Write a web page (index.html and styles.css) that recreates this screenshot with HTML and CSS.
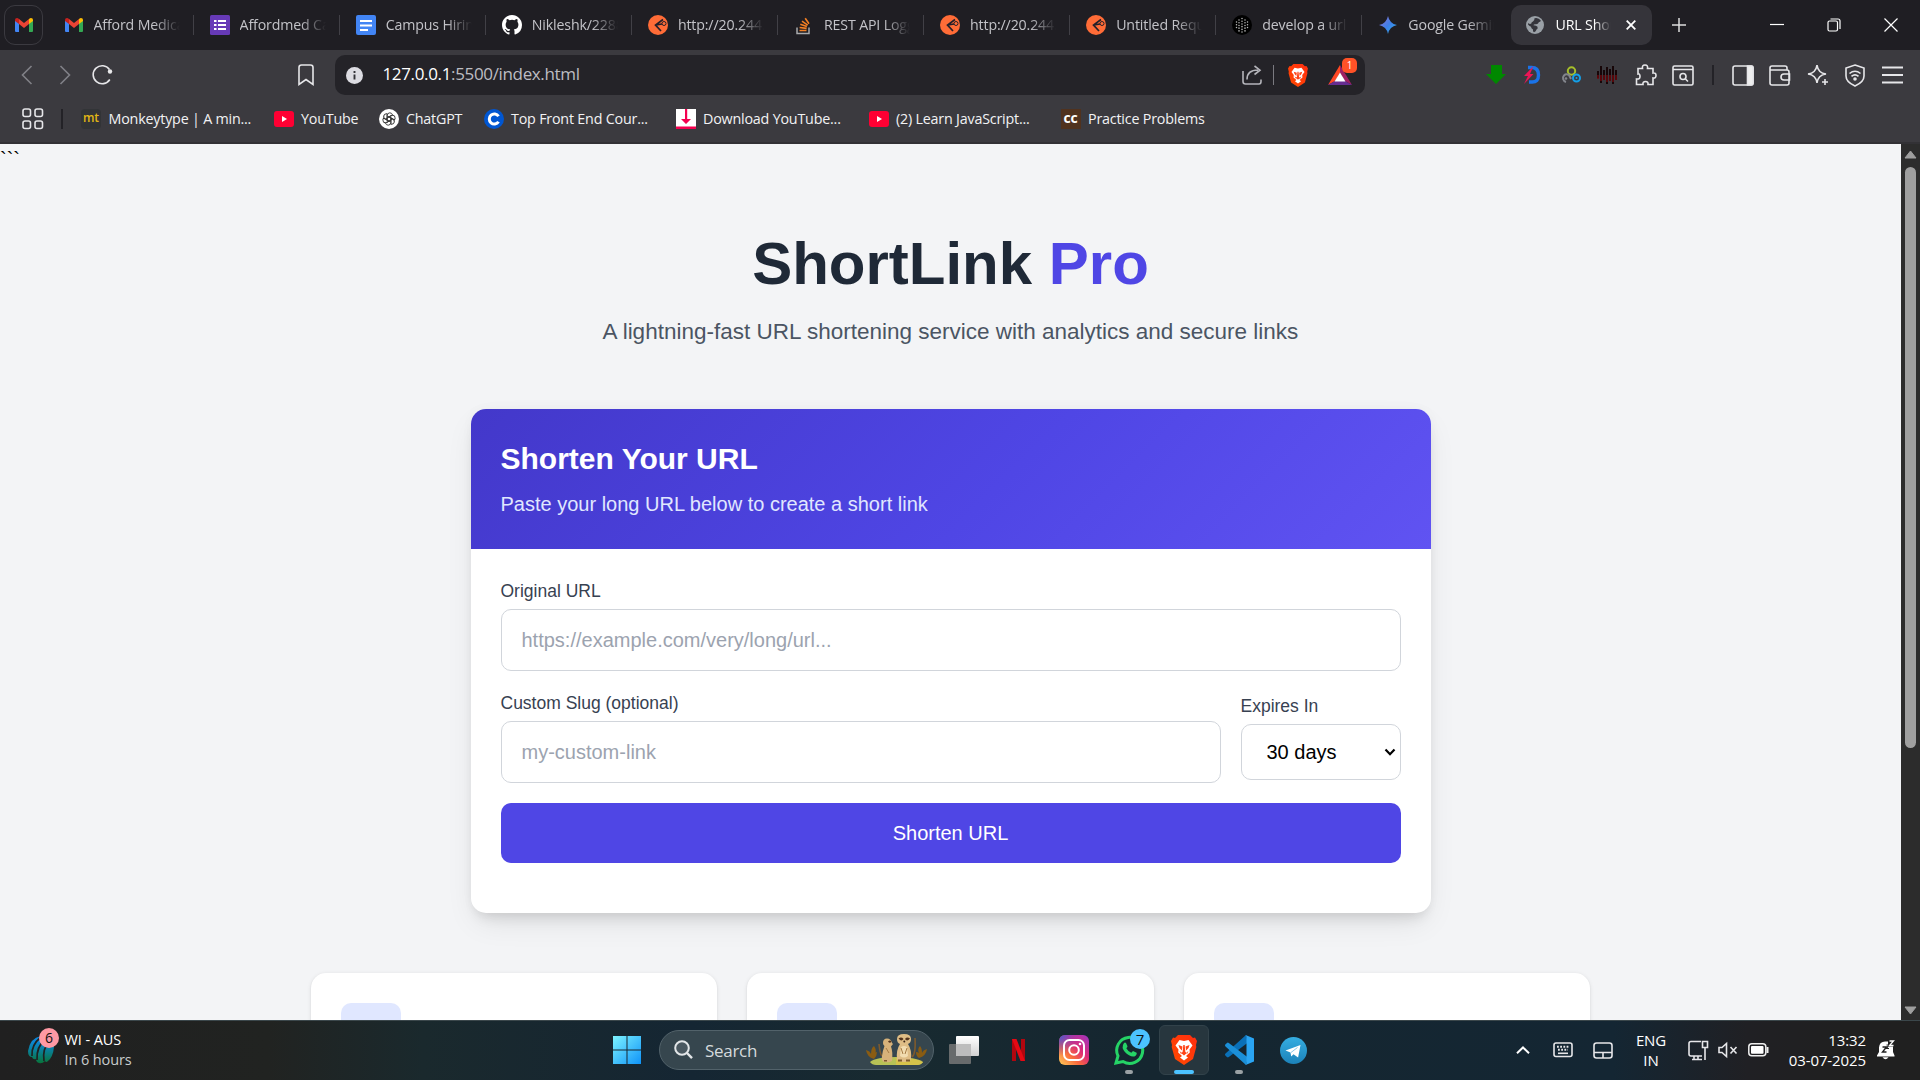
FILE: index.html
```html
<!DOCTYPE html>
<html lang="en">
<head>
<meta charset="utf-8">
<title>URL Shortener</title>
<link rel="stylesheet" href="styles.css">
</head>
<body>
<svg class="defs" aria-hidden="true">
  <defs>
    <linearGradient id="gem" x1="0" x2="1" y1="0" y2="1"><stop offset="0" stop-color="#9b72cb"/><stop offset=".5" stop-color="#3f7fe8"/><stop offset="1" stop-color="#2ab0e8"/></linearGradient>
    <linearGradient id="braveG" x1="0" x2="1" y1="1" y2="0"><stop offset="0" stop-color="#ff4b00"/><stop offset="1" stop-color="#ff2d10"/></linearGradient>
    <linearGradient id="win" x1="0" x2="1" y1="0" y2="1"><stop offset="0" stop-color="#7df3ff"/><stop offset="1" stop-color="#0f93f8"/></linearGradient>
    <linearGradient id="cric" x1="0" x2="0" y1="0" y2="1"><stop offset=".2" stop-color="#0b87d8"/><stop offset="1" stop-color="#08743a"/></linearGradient>
    <linearGradient id="igA" x1="0" x2="1" y1="1" y2="0"><stop offset="0" stop-color="#ffd05a"/><stop offset=".35" stop-color="#fa6a3c"/><stop offset=".6" stop-color="#dc2c77"/><stop offset="1" stop-color="#9b36c4"/></linearGradient>
    <radialGradient id="igB" cx="0" cy="0" r=".7"><stop offset="0" stop-color="#3b5bd8"/><stop offset="1" stop-color="#7c3fd0" stop-opacity="0"/></radialGradient>
    <linearGradient id="tg" x1="0" x2="0" y1="0" y2="1"><stop offset="0" stop-color="#35ade1"/><stop offset="1" stop-color="#1c82b9"/></linearGradient>
    <linearGradient id="tvA" x1="0" x2="0" y1="0" y2="1"><stop offset="0" stop-color="#fff"/><stop offset="1" stop-color="#d2d2d2"/></linearGradient>
  </defs>
  <symbol id="gmail" viewBox="0 0 20 16"><path fill="#4285f4" d="M1 3v11q0 1 1 1h3V6z"/><path fill="#34a853" d="M15 6v9h3q1 0 1-1V3z"/><path fill="#ea4335" d="M5 2l5 4 5-4v5l-5 4-5-4z"/><path fill="#c5221f" d="M1 4V3q0-2 2-2 1 0 2 1v5z"/><path fill="#fbbc04" d="M15 2q1-1 2-1 2 0 2 2v1l-4 3z"/></symbol>
  <symbol id="forms" viewBox="0 0 20 20"><rect width="20" height="20" rx="1.5" fill="#673ab7"/><path stroke="#fff" stroke-width="2" d="M4 6h2.500M8 6h8M4 10h2.500M8 10h8M4 14h2.500M8 14h8"/></symbol>
  <symbol id="docs" viewBox="0 0 20 20"><rect width="20" height="20" rx="2" fill="#4285f4"/><path stroke="#fff" stroke-width="2" d="M4 6h12M4 10.500h12M4 15h8"/></symbol>
  <symbol id="github" viewBox="0 0 16 16"><path fill="#fff" d="M8 0C3.580 0 0 3.580 0 8c0 3.540 2.290 6.530 5.470 7.590.4.070.55-.17.55-.38 0-.19-.01-.82-.01-1.490-2.010.37-2.530-.49-2.690-.94-.09-.23-.48-.94-.82-1.130-.28-.15-.68-.52-.01-.53.63-.01 1.080.58 1.230.82.72 1.210 1.870.87 2.330.66.070-.52.280-.87.510-1.070-1.780-.2-3.640-.89-3.640-3.950 0-.87.310-1.590.82-2.150-.08-.2-.36-1.020.08-2.120 0 0 .67-.21 2.200.82a7.600 7.600 0 014 0c1.530-1.040 2.200-.82 2.200-.82.440 1.100.160 1.920.080 2.120.510.560.820 1.270.820 2.150 0 3.070-1.870 3.750-3.650 3.950.290.250.540.730.540 1.480 0 1.070-.01 1.930-.01 2.200 0 .210.150.460.550.380A8.010 8.010 0 0016 8c0-4.420-3.580-8-8-8z"/></symbol>
  <symbol id="postman" viewBox="0 0 20 20"><circle cx="10" cy="10" r="10" fill="#ff6c37"/><path d="M15 4.500L7.500 10l5.500 6M8 10l6-1" fill="none" stroke="#24202a" stroke-width="1.700"/><circle cx="16" cy="8.500" r="2" fill="#ff6c37" stroke="#24202a"/></symbol>
  <symbol id="stack" viewBox="0 0 20 20"><path d="M3 12.500v6h12v-6" fill="none" stroke="#a9abad" stroke-width="1.500"/><path d="M5.500 15.500h7M5.600 12.500l7 .9M6.300 9.200l6.600 2.400M8 6.200l5.700 4M11.200 3.200l3.800 5.600" stroke="#f48024" stroke-width="1.600"/></symbol>
  <symbol id="dots" viewBox="0 0 20 20"><circle cx="10" cy="10" r="10" fill="#000"/><g fill="none" stroke="#bbb" stroke-width="1.500" stroke-linecap="round" stroke-dasharray=".1 2.600"><path d="M10 3.500v14M7 5v11M13 5v11M4.500 7v7M15.500 7v7"/></g></symbol>
  <symbol id="gemini" viewBox="0 0 20 20"><path fill="url(#gem)" d="M10 1q1.500 7.500 9 9-7.500 1.500-9 9-1.500-7.500-9-9 7.500-1.500 9-9z"/></symbol>
  <symbol id="globe" viewBox="0 0 20 20"><circle cx="10" cy="10" r="9" fill="#9aa0a6"/><path d="M9.500 3.200q4-1 6.300 2.300-.3 1.500-1.800 1.500-1 2.300-3 2.200-2.500-.3-2.500 1 3 .3 4 1.500.8 2-1 2.800-.5 2.300-2.500 2.800-1.500-.5-1-2.800-2-1-2-2.700Q4 11 3 9.500l.3-1.500q1.500 1.500 3 .5 0-1.700 1.700-2 1.600-.6 1.500-3.300z" fill="#35353c"/></symbol>
  <symbol id="yt" viewBox="0 0 20 14"><rect y="-1" width="20" height="16" rx="3" fill="#ff0033"/><path fill="#fff" d="M8 4v6l5-3z"/></symbol>
  <symbol id="gpt" viewBox="0 0 20 20"><circle cx="10" cy="10" r="10" fill="#fff"/><g fill="none" stroke="#333" stroke-width=".9"><path id="petal" d="M8.200 12.800V6.500q.2-2.600 2.600-2.700 2 .1 2.700 1.900L8.600 8.600"/><use href="#petal" transform="rotate(60 10 10)"/><use href="#petal" transform="rotate(120 10 10)"/><use href="#petal" transform="rotate(180 10 10)"/><use href="#petal" transform="rotate(240 10 10)"/><use href="#petal" transform="rotate(300 10 10)"/></g></symbol>
  <symbol id="cours" viewBox="0 0 20 20"><circle cx="10" cy="10" r="10" fill="#0056d2"/><path d="M14.500 7.300a5 5 0 100 5.400" fill="none" stroke="#fff" stroke-width="3"/></symbol>
  <symbol id="dl" viewBox="0 0 20 20"><path fill="#fff" d="M0 0h20v20H0z"/><path fill="#f4004f" d="M9 0h2.200v10H15l-5 5-5-5h4zM0 17.500h20V20H0z"/></symbol>
  <symbol id="brave" viewBox="0 0 26 30"><path fill="url(#braveG)" d="M7 0h12l3 3 2-.5L26 6l-1 4 .3 2-3.300 12L13 30 4 24 .7 12 1 10 0 6l2-3.500L4 3z"/><path fill="#fff" d="M8.500 5L13 6l4.500-1 4 5.500-3 4 .3 3-3.800 3.500 2 1.500-4 3-4-3 2-1.500L7.200 17.500l.3-3-3-4z"/><path fill="#ff4316" d="M7.500 10l4 1.500-.7 4L8.500 13zm11 0l-4 1.500.7 4 2.300-2.500zM12.300 10h1.400l.7 7 1.500 1-2.900 2.500-2.900-2.500 1.500-1zM8.500 16l2.500 2-1 1zm9 0L15 18l1 1z"/></symbol>
</svg>

<div class="browser">
  <div class="tabstrip">
    <div class="pinned"><svg class="i20"><use href="#gmail"/></svg></div>
    <div class="tab"><svg class="i20"><use href="#gmail"/></svg><span class="ttl">Afford Medical</span></div>
    <div class="tab"><svg class="i20"><use href="#forms"/></svg><span class="ttl">Affordmed Campus</span></div>
    <div class="tab"><svg class="i20"><use href="#docs"/></svg><span class="ttl">Campus Hiring Eval</span></div>
    <div class="tab"><svg class="i20"><use href="#github"/></svg><span class="ttl">Nikleshk/22881</span></div>
    <div class="tab"><svg class="i20"><use href="#postman"/></svg><span class="ttl">http://20.244.56</span></div>
    <div class="tab"><svg class="i20"><use href="#stack"/></svg><span class="ttl">REST API Logging</span></div>
    <div class="tab"><svg class="i20"><use href="#postman"/></svg><span class="ttl">http://20.244.56</span></div>
    <div class="tab"><svg class="i20"><use href="#postman"/></svg><span class="ttl">Untitled Request</span></div>
    <div class="tab"><svg class="i20"><use href="#dots"/></svg><span class="ttl">develop a url short</span></div>
    <div class="tab last"><svg class="i20"><use href="#gemini"/></svg><span class="ttl">Google Gemini</span></div>
    <div class="tab active"><svg class="i20"><use href="#globe"/></svg><span class="ttl">URL Shortener</span><svg class="close" viewBox="0 0 10 10"><path d="M.7.7l8.600 8.600M9.300.7L.7 9.300" stroke="#fff" stroke-width="1.800"/></svg></div>
    <svg class="plus" viewBox="0 0 14 14"><path d="M7 0v14M0 7h14" stroke="#ddd" stroke-width="1.500"/></svg>
    <div class="winbtns">
      <span><svg width="14" height="14"><path d="M0 6.500h14" stroke="#fff" stroke-width="1.200"/></svg></span>
      <span><svg width="14" height="14" fill="none" stroke="#fff" stroke-width="1.200"><rect x="1" y="3" width="9.500" height="10" rx="1.500"/><path d="M3.500 1H11q2 0 2 2v8"/></svg></span>
      <span><svg width="14" height="14"><path d="M.5.5l13 13M13.500.5l-13 13" stroke="#fff" stroke-width="1.200"/></svg></span>
    </div>
  </div>

  <div class="toolbar">
    <div class="nav">
      <svg width="12" height="20" class="dim"><path d="M10.500 1L1.500 10l9 9"/></svg>
      <svg width="12" height="20" class="dim"><path d="M1.500 1l9 9-9 9"/></svg>
      <svg width="22" height="22" class="ln reload"><path d="M18.500 5.500A9 9 0 1018.800 15.500"/><circle cx="19" cy="7.500" r="2.200" fill="#e8e8ea" stroke="none"/></svg>
    </div>
    <svg width="18" height="22" class="ln mark"><path d="M2 3.500Q2 1 4.500 1h9Q16 1 16 3.500V20.500l-7-5-7 5z"/></svg>
    <div class="urlbar">
      <svg width="17" height="17"><circle cx="8.500" cy="8.500" r="8.500" fill="#dcdce2"/><path d="M8.500 7.500v5M8.500 4v2" stroke="#333338" stroke-width="1.900"/></svg>
      <span class="url">127.0.0.1<i>:5500/index.html</i></span>
      <svg width="20" height="20" class="share"><path d="M1 6v10.500Q1 19 3.500 19H17q2 0 2-2.500v-2M5 14.500Q5 5 16 5M12.500 1l5.500 4.200L12.500 9.500"/></svg>
      <b class="vr"></b>
      <svg class="shield"><use href="#brave"/></svg>
      <div class="bat"><svg width="24" height="21" viewBox="0 0 24 21"><path fill="#ff4724" d="M12 0v8L7 16 0 20z"/><path fill="#9e1f63" d="M12 0l12 20-7-4-5-8z"/><path fill="#662d91" d="M0 20l7-4h10l7 4z"/><path fill="#fff" d="M12 7.500l5.500 9h-11z"/></svg><em>1</em></div>
    </div>
    <div class="exts">
      <span><svg width="20" height="20"><path fill="#080" d="M5 0h11v9h4L10 19 0 9h5z"/></svg></span>
      <span><svg width="18" height="20"><path d="M4 2.500h3.500q7 0 7 7.500t-7 7H5" fill="none" stroke="#1a73e8" stroke-width="3.400"/><path fill="#ed1556" d="M9.500 1L0 11h4l-4 8 9.500-10H6z"/></svg></span>
      <span><svg width="20" height="18" fill="none" stroke-width="2"><circle cx="10.500" cy="5" r="3.700" stroke="#a6bf2a"/><path d="M5 16a4 4 0 01-2-6.500q2-2 5-.5l2 4" stroke="#83858c"/><circle cx="5" cy="12.500" r="1.300" fill="#83858c" stroke="none"/><circle cx="15.500" cy="12" r="3.500" stroke="#149fe8"/><circle cx="15.500" cy="12" r="1" fill="#149fe8" stroke="none"/></svg></span>
      <span><svg width="22" height="20"><path d="M1 6v7M4 1v17M7 5v10M10 2v17M13 4v12M16 1v18M19 5v10" stroke="#170608" stroke-width="2"/><path d="M1 10v4M4 10v6M7 10v5M10 10v7M13 10v6M16 10v7M19 10v5" stroke="#6d090c" stroke-width="1.500"/></svg></span>
      <span><svg width="22" height="22" class="ln"><path d="M3 4.500h4.500q-.7-3.500 2.500-3.500t2.500 3.500H18V9q3-.5 3 2.500T18 14v6.500h-5q.5-3-2.500-3t-2.500 3H1.500V15q3.500.5 3.500-2.500T3 10z"/></svg></span>
      <span><svg width="22" height="21" class="ln"><rect x="1" y="1" width="20" height="19" rx="1.500"/><path d="M1 4.500h20M13.500 14l2.500 2.500"/><circle cx="11" cy="11.500" r="3"/></svg></span>
      <b></b>
      <span><svg width="22" height="21" class="ln"><rect x="1" y="1" width="20" height="19" rx="2"/><path fill="#eee" d="M15.500 1h4q1.500 0 1.500 1.500v16q0 1.500-1.500 1.500h-4z"/></svg></span>
      <span><svg width="22" height="21" class="ln"><path d="M18 5V3q0-2-2-2H3Q1 1 1 3v15q0 2 2 2h15q2 0 2-2V7q0-2-2-2H1M20.500 9H15q-3 0-3 3t3 3h5.500z"/></svg></span>
      <span><svg width="22" height="22" class="ln"><path d="M10 1q1 8 9 9-8 1-9 9-1-8-9-9 8-1 9-9zM18 15v6M15 18h6"/></svg></span>
      <span><svg width="20" height="23" class="ln"><path d="M10 1l9 3v8q0 6-9 10Q1 18 1 12V4zM4.500 9.500q5.500-4.500 11 0M6.500 12.300q3.500-3 7 0"/><circle cx="10" cy="15" r="1" fill="#eee"/></svg></span>
      <span><svg width="21" height="18" class="ln thick"><path d="M0 1.500h21M0 9h21M0 16.500h21"/></svg></span>
    </div>
  </div>

  <div class="bookmarks">
    <svg width="22" height="22" class="ln grid"><rect x="1" y="1" width="7.500" height="7.500" rx="2"/><rect x="13" y="1" width="7.500" height="7.500" rx="2"/><rect x="1" y="13" width="7.500" height="7.500" rx="2"/><rect x="13" y="13" width="7.500" height="7.500" rx="2"/></svg>
    <b class="bsep"></b>
    <div class="bm w1"><i class="mt">mt</i><span>Monkeytype | A min...</span></div>
    <div class="bm w2"><svg class="i20"><use href="#yt"/></svg><span>YouTube</span></div>
    <div class="bm w3"><svg class="i20"><use href="#gpt"/></svg><span>ChatGPT</span></div>
    <div class="bm w4"><svg class="i20"><use href="#cours"/></svg><span>Top Front End Cour...</span></div>
    <div class="bm w5"><svg class="i20"><use href="#dl"/></svg><span>Download YouTube...</span></div>
    <div class="bm w6"><svg class="i20"><use href="#yt"/></svg><span>(2) Learn JavaScript...</span></div>
    <div class="bm"><i class="cc">cc</i><span>Practice Problems</span></div>
  </div>
</div>

<div class="view">
  <main class="page">
    <div class="stray">```</div>
    <header class="hero">
      <h1>ShortLink <span>Pro</span></h1>
      <p>A lightning-fast URL shortening service with analytics and secure links</p>
    </header>
    <section class="card">
      <div class="cardhead">
        <h2>Shorten Your URL</h2>
        <p>Paste your long URL below to create a short link</p>
      </div>
      <form class="form">
        <div class="field">
          <label>Original URL</label>
          <input type="text" placeholder="https://example.com/very/long/url...">
        </div>
        <div class="row">
          <div class="field grow">
            <label>Custom Slug (optional)</label>
            <input type="text" placeholder="my-custom-link">
          </div>
          <div class="field exp">
            <label>Expires In</label>
            <div class="select">30 days<svg width="12" height="9"><path d="M1.500 1.500L6 6.200l4.500-4.700" fill="none" stroke="#000" stroke-width="2.200"/></svg></div>
          </div>
        </div>
        <button type="button">Shorten URL</button>
      </form>
    </section>
    <section class="features">
      <div class="feat"><div class="fico"></div></div>
      <div class="feat"><div class="fico"></div></div>
      <div class="feat"><div class="fico"></div></div>
    </section>
  </main>
  <div class="scroll">
    <svg width="13" height="9"><path d="M6.500 1L12 8H1z" fill="#9f9f9f" stroke="#9f9f9f" stroke-linejoin="round"/></svg>
    <div class="thumb"></div>
    <svg class="down" width="13" height="9"><path d="M6.500 8L12 1H1z" fill="#9f9f9f" stroke="#9f9f9f" stroke-linejoin="round"/></svg>
  </div>
</div>

<footer class="taskbar">
  <div class="widget">
    <div class="wicon"><svg width="27" height="29"><path fill="url(#cric)" d="M1 16Q3 3 14 1q10 0 13 11-1 10-6 14-2 2-3 0-3 3-6 2-3-1-3-4-3 1-4-2-4 0-4-6z"/><path d="M14 2Q4 10 5 21M19 3Q9 12 10 25M23 5q-8 9-6 21" fill="none" stroke="#1f2221" stroke-width="1.700"/></svg><em>6</em></div>
    <div class="wtext"><span>WI - AUS</span><small>In 6 hours</small></div>
  </div>
  <svg class="start" width="30" height="30"><path fill="url(#win)" d="M1 1h13.500v13.500H1zM15.500 1H29v13.500H15.500zM1 15.500h13.500V29H1zM15.500 15.500H29V29H15.500z"/></svg>
  <div class="search">
    <svg width="20" height="20"><circle cx="8" cy="8" r="6.800" fill="rgba(255,255,255,.1)" stroke="#e3e6e8" stroke-width="2"/><path d="M13 13l5 5.200" stroke="#e3e6e8" stroke-width="2.400"/></svg>
    <span>Search</span>
    <svg class="meer" width="62" height="32" viewBox="0 0 62 32">
      <path fill="#b8c256" d="M4 28q6-5 26-5t27 5q-2 3-6 3H10q-4 0-6-3z"/><path fill="#d6c34a" d="M30 24q20 0 27 4-2 3-6 3H30z"/>
      <path fill="#8a5c12" d="M8 25q-7-2-8-9 4 1 5 4 0-6 3-8 3 4 1 8 0-2 2-2 0 4-3 7zM53 24q7-2 8-9-4 1-5 4 0-5-2-7-3 3-1 7-1-1-3-1 0 4 3 6z"/>
      <path d="M13 10q1 10 3 12M49 4q1 16-3 19" stroke="#7d5a2d" stroke-width="1.600" fill="none"/>
      <path fill="#d7b27a" d="M17 9q0-4.500 4-4.500T26 9l1 1-2 2.500q2 5 1 14.500-3 2-8 1-3-1-2-6 .5-5 2.500-10-1.500-1-1.500-3z"/><path fill="#dfbd86" d="M31 5q0-5 7-5t7 5q0 4-3 5 4 6 3 15 0 3-7 3t-7-3q-1-9 3-15-3-1-3-5z"/>
      <path fill="#f2dcb0" d="M35 13q3-2 6 0l1 9q-4 3-8 0z"/><path d="M35 14l2 6M41 14l-2 6M20 14l3 5" stroke="#a67c45" fill="none"/>
      <path fill="#54341d" d="M32.500 4.500q3-2 5 .5-2 3-5-.5zM39 5q2-2.500 5-.5-3 3.500-5 .5zM22 7.500q2-2 3.500 0-1.500 2.500-3.500 0z"/><circle cx="38.300" cy="7.500" r="1" fill="#3a2415"/>
      <path fill="#7d5a2d" d="M32 25.500h4v2h-4zM40 25.500h4v2h-4zM18 26h3v1.500h-3z"/>
    </svg>
  </div>
  <div class="apps">
    <span><svg width="30" height="28"><rect x="7" width="23" height="20" rx="1" fill="url(#tvA)"/><rect y="8" width="22" height="20" rx="1" fill="#777" opacity=".85"/><path d="M7 8h15v12H7z" fill="#bdbdbd"/></svg></span>
    <span><svg width="13" height="22"><path fill="#b1060f" d="M0 0h4v22H0zM9 0h4v22H9z"/><path fill="#e50914" d="M0 0h4.500L13 22H8.500z"/></svg></span>
    <span><svg width="30" height="30"><rect width="30" height="30" rx="6" fill="url(#igA)"/><rect width="30" height="30" rx="6" fill="url(#igB)"/><g fill="none" stroke="#fff" stroke-width="2"><rect x="5" y="5" width="20" height="20" rx="5.500"/><circle cx="15" cy="15" r="4.800"/></g><circle cx="21" cy="9" r="1.300" fill="#fff"/></svg></span>
    <span class="run"><svg width="30" height="30" viewBox="0 0 30 30"><path d="M2 28l2-7A13 13 0 119 26.500z" fill="none" stroke="#25d366" stroke-width="3"/><path fill="#25d366" d="M10 8q1-1 2 0l1.500 3.200q0 1-1.200 2 2 3.500 5 4.600l1.700-1.900 3.600 1.800q.8 1-1 3-2.400 2-6.600-.4-5-3-6.400-7.300-.2-3 1.400-5z"/></svg><em>7</em></span>
    <span class="cur"><svg width="26" height="30"><use href="#brave"/></svg></span>
    <span class="run"><svg width="30" height="30"><path fill="#0a70b8" d="M22 0L1.500 18.500q-1.200 1.100 0 2.200l1.500 1.400q.8.600 1.800 0L24 7.500z"/><path fill="#1b8fd8" d="M22 30L1.500 11.500q-1.200-1.100 0-2.200L3 7.900q.8-.6 1.800 0L24 22.500z"/><path fill="#2aa5f3" d="M21.500 0L30 3.500v23L21.500 30q1-1 1-3V3q0-2-1-3z"/></svg></span>
    <span><svg width="27" height="27"><circle cx="13.500" cy="13.500" r="13.500" fill="url(#tg)"/><path fill="#fff" d="M5.500 13.500L20.500 8l-2.400 12.500-4.600-3.300-2.300 2.200-.7-4z"/><path d="M11 15.500l6.500-5" stroke="#8cc7e6" stroke-width="1"/></svg></span>
  </div>
  <div class="tray">
    <svg class="t1" width="14" height="8"><path d="M1 7.200L7 1.500l6 5.700" fill="none" stroke="#fff" stroke-width="2"/></svg>
    <svg class="t2 ln" width="20" height="16"><rect x="1" y="1" width="18" height="13.500" rx="2"/><path d="M4 4.700h12M5 7.800h10" stroke-width="1.900" stroke-dasharray="1.800 1.400"/><path d="M5 11.300h10"/></svg>
    <svg class="t3 ln" width="20" height="17"><rect x="1" y="1" width="18" height="15" rx="2.500"/><path d="M1 10.500h18M10 10.500V16"/></svg>
    <div class="lang"><span>ENG</span><span>IN</span></div>
    <svg class="t4 ln" width="21" height="21"><path d="M13 1.500H3q-2 0-2 2V14q0 2 2 2h11M6 16v3.500M10 16v3.500M4 19.500h10M14.500 1.500h5v6h-5zM17 7.500V20"/></svg>
    <svg class="t5 ln" width="20" height="16"><path d="M1 5.500h3l4.500-4v13l-4.500-4H1zM12.500 5l6 6.500M18.500 5l-6 6.500"/></svg>
    <svg class="t6" width="21" height="14"><rect x=".8" y=".8" width="17" height="12" rx="3" fill="none" stroke="#eee" stroke-width="1.500"/><rect x="3" y="3" width="12.500" height="7.800" rx="1" fill="#fff"/><path d="M19.500 4v6" stroke="#eee" stroke-width="2"/></svg>
    <div class="clock"><span>13:32</span><span>03-07-2025</span></div>
    <svg class="t7" width="18" height="20"><path fill="#fff" d="M0 15.500l2-3.500V7.500Q2.500 1.500 8 1.500h3v5h5V12l1.500 3.500v1H0zM5.500 17.300h6q-3 3.800-6 0z"/><path d="M5.500 7h4l-4 5h4" fill="none" stroke="#202020" stroke-width="1.400"/><path d="M9.500 5H12l-2.500 3.500H12" fill="none" stroke="#202020" stroke-width="1.100"/><path d="M12.500 1H16.500l-4 4.500h4" fill="none" stroke="#fff" stroke-width="1.300"/></svg>
  </div>
</footer>
</body>
</html>
```
FILE: styles.css
```css
* { box-sizing: border-box; }
body {
  margin: 0;
  width: 1920px;
  height: 1080px;
  overflow: hidden;
  display: flex;
  flex-direction: column;
  font-family: "Open Sans", "Noto Sans", sans-serif;
}
svg { display: block; flex: none; overflow: visible; }
em, i { font-style: normal; }
.defs { position: absolute; width: 0; height: 0; }
.i20 { width: 20px; height: 20px; }

/* browser chrome */
.browser { height: 144px; flex: none; background: #3b3a3f; border-bottom: 2px solid #323135; color: #f2f2f4; }
.tabstrip { height: 50px; background: #1f1e23; display: flex; align-items: center; padding-left: 4px; }
.pinned { width: 39px; height: 40px; border: 1px solid #3b3a40; border-radius: 11px; display: flex; align-items: center; justify-content: center; margin-right: 4.5px; }
.tab { width: 146.1px; height: 40px; display: flex; align-items: center; padding-left: 16px; gap: 10px; position: relative; flex: none; }
.tab:not(.last):not(.active)::after { content: ""; position: absolute; right: 0; top: 10px; width: 1px; height: 20px; background: #414046; }
.ttl {
  width: 86px; overflow: hidden; white-space: nowrap; font-size: 14.2px; line-height: 20px; padding-bottom: 1px; letter-spacing: -0.15px; color: #c3c3c8;
  -webkit-mask-image: linear-gradient(90deg, #000 70%, transparent);
  mask-image: linear-gradient(90deg, #000 70%, transparent);
}
.active { width: 141px; margin-left: 3px; padding-left: 14px; background: #35343a; border-radius: 10px; }
.active .ttl { width: 56px; color: #fff; }
.close { width: 10px; height: 10px; margin-left: 5px; }
.plus { width: 14px; height: 14px; margin-left: 20px; }
.winbtns { display: flex; margin-left: auto; padding-right: 1px; }
.winbtns span { width: 57px; display: flex; justify-content: center; }

.ln { fill: none; stroke: #e6e6e9; stroke-width: 1.6; }
.thick { stroke-width: 2; }
.dim { fill: none; stroke: #818187; stroke-width: 1.6; }
.toolbar { height: 50px; display: flex; align-items: center; padding-left: 21px; }
.nav { display: flex; align-items: center; gap: 26px; width: 276px; }
.reload { margin-left: -6px; }
.mark { margin-right: 20px; }
.urlbar { width: 1030px; height: 40px; background: #242328; border-radius: 10px; display: flex; align-items: center; padding-left: 11px; }
.url { font-size: 17px; line-height: 24px; padding-bottom: 2px; letter-spacing: -0.35px; margin-left: 19.5px; width: 859.5px; color: #fff; }
.url i { color: #bdbdc2; }
.share { fill: none; stroke: #b4b4ba; stroke-width: 1.6; }
.vr { width: 1px; height: 20px; background: #7a7a80; margin: 0 14px 0 11px; }
.shield { width: 20px; height: 23px; }
.bat { position: relative; margin-left: 20px; }
.bat em { position: absolute; left: 14px; top: -7px; width: 15px; height: 15px; border-radius: 5px; background: #ff5227; color: #fff; font-size: 10px; line-height: 15px; text-align: center; }
.exts { display: flex; align-items: center; margin-left: auto; padding-right: 8.5px; }
.exts span { width: 37.5px; display: flex; justify-content: center; }
.exts b { width: 2px; height: 20px; background: #232227; margin: 0 10px; }

.bookmarks { height: 38px; display: flex; align-items: center; padding-left: 22px; }
.bsep { width: 2px; height: 20px; background: #232227; margin: 0 18.5px 0 16.5px; }
.bm { display: flex; align-items: center; gap: 7.5px; font-size: 14.3px; line-height: 20px; letter-spacing: -0.2px; white-space: nowrap; }
.bm span { padding-bottom: 1px; }
.w1 { width: 192.5px; } .w2 { width: 105px; } .w3 { width: 105px; }
.w4 { width: 192px; } .w5 { width: 193px; } .w6 { width: 192px; }
.mt, .cc { width: 20px; height: 20px; text-align: center; font-weight: 600; font-size: 12px; line-height: 18px; }
.mt { background: #323437; color: #e2b714; border-radius: 4px; }
.cc { background: #50321e; color: #fff; font-weight: 700; font-size: 14px; line-height: 17px; }

/* web page */
.view { height: 876px; display: flex; background: #f3f4f6; overflow: hidden; font-family: "Liberation Sans", Arial, sans-serif; }
.page { width: 1901px; height: 876px; overflow: hidden; }
.stray { height: 30px; font-size: 20px; line-height: 30px; color: #000; }
.hero { padding: 60px 0; text-align: center; }
h1, h2, p { margin: 0; }
h1 { font-size: 60px; line-height: 60px; color: #1f2937; }
h1 span { color: #4f46e5; }
.hero p { margin-top: 20px; font-size: 22.5px; line-height: 35px; color: #4b5563; }
.card { width: 960px; margin: 0 auto; background: #fff; border-radius: 15px; overflow: hidden; box-shadow: 0 12.5px 31px -6px rgba(0,0,0,.1), 0 10px 12.5px -6px rgba(0,0,0,.1), 0 0 12px rgba(0,0,0,.03); }
.cardhead { height: 140px; padding: 30px; background: linear-gradient(135deg, #4338ca, #4f46e5 55%, #6053f2); color: #fff; }
.cardhead h2 { font-size: 30px; line-height: 39px; margin-bottom: 11px; }
.cardhead p { font-size: 20px; line-height: 30px; color: #e0e7ff; }
.form { padding: 30px 30px 50px; display: flex; flex-direction: column; gap: 20px; }
.field { display: flex; flex-direction: column; gap: 5px; }
.row { display: flex; align-items: center; gap: 20px; }
.grow { flex: 1; }
.exp { width: 160px; }
label { font-size: 17.5px; line-height: 25px; color: #374151; }
input { width: 100%; height: 62px; border: 1px solid #d1d5db; border-radius: 10px; padding: 15px 20px; font: 20px/30px "Liberation Sans", Arial, sans-serif; background: #fff; }
input::placeholder { color: #9ca3af; }
.select { height: 56px; border: 1px solid #d1d5db; border-radius: 10px; padding: 0 4px 0 25px; display: flex; align-items: center; justify-content: space-between; font-size: 20px; color: #000; }
button { height: 60px; border: 0; border-radius: 10px; background: #4f46e5; color: #fff; font: 20px "Liberation Sans", Arial, sans-serif; }
.features { width: 1280px; margin: 60px auto 0; display: grid; grid-template-columns: repeat(3, 1fr); gap: 30px; }
.feat { height: 240px; padding: 30px; background: #fff; border-radius: 15px; box-shadow: 0 1px 4px rgba(0,0,0,.1), 0 1px 2px rgba(0,0,0,.06); }
.fico { width: 60px; height: 60px; border-radius: 10px; background: #e0e7ff; }
.scroll { width: 19px; background: #2c2c2c; display: flex; flex-direction: column; align-items: center; padding: 6px 0 5px; }
.thumb { width: 11px; height: 581px; margin-top: 8px; border-radius: 6px; background: #9f9f9f; }
.down { margin-top: auto; }

/* taskbar */
.taskbar { height: 60px; flex: none; display: flex; align-items: center; padding-bottom: 1px; border-top: 1px solid #3b474b; color: #fff; background: linear-gradient(90deg, #202020 0, #212321 14%, #1a292d 22%, #152633 36%, #182a30 46%, #152630 60%, #142633 84%, #202024 91%, #202020 96%); }
.widget { display: flex; width: 612px; padding-left: 27px; gap: 10.5px; align-items: center; }
.wicon { position: relative; top: -1px; }
.wicon em { position: absolute; left: 12px; top: -7px; width: 20px; height: 20px; border-radius: 50%; background: #ff99a4; color: #111; font-size: 14px; line-height: 20px; text-align: center; }
.wtext { display: flex; flex-direction: column; font-size: 14.5px; line-height: 20px; letter-spacing: -0.1px; padding-bottom: 1px; }
.wtext small { font-size: 14.5px; color: #c9cccd; }
.search { width: 275px; height: 40px; margin: 0 2px 0 17px; border: 1px solid #52626a; border-radius: 20px; background: #36464e; display: flex; align-items: center; padding-left: 14px; font-size: 17px; color: #d5dadc; }
.search span { margin-left: 11px; letter-spacing: -0.3px; }
.meer { margin: 0 5px 0 auto; }
.apps { display: flex; }
.apps span { width: 55px; height: 50px; display: flex; align-items: center; justify-content: center; position: relative; }
.apps em { position: absolute; left: 29px; top: 4px; width: 20px; height: 20px; border-radius: 50%; background: #4cc2ff; color: #111; font-size: 15px; line-height: 20px; text-align: center; }
.apps .cur { width: 50px; margin: 0 2.5px; background: #27363e; border: 1px solid #32424a; border-radius: 6px; }
.run::after, .cur::after { content: ""; position: absolute; bottom: 1px; width: 8px; height: 4px; border-radius: 2px; background: #9aa1a4; }
.cur::after { width: 20px; bottom: 0; background: #4cc2ff; }
.tray { flex: 1; display: flex; align-items: center; justify-content: flex-end; padding-right: 25px; }
.t2 { margin-left: 23px; } .t3 { margin-left: 20px; } .t4 { margin-left: 8px; }
.t5 { margin-left: 9px; } .t6 { margin-left: 10px; } .t7 { margin-left: 11px; }
.lang, .clock { display: flex; flex-direction: column; font-size: 15px; line-height: 20px; letter-spacing: -0.1px; padding-bottom: 1px; }
.lang { width: 48px; align-items: center; margin-left: 14px; margin-right: 5px; }
.clock { width: 97px; align-items: flex-end; }
```
